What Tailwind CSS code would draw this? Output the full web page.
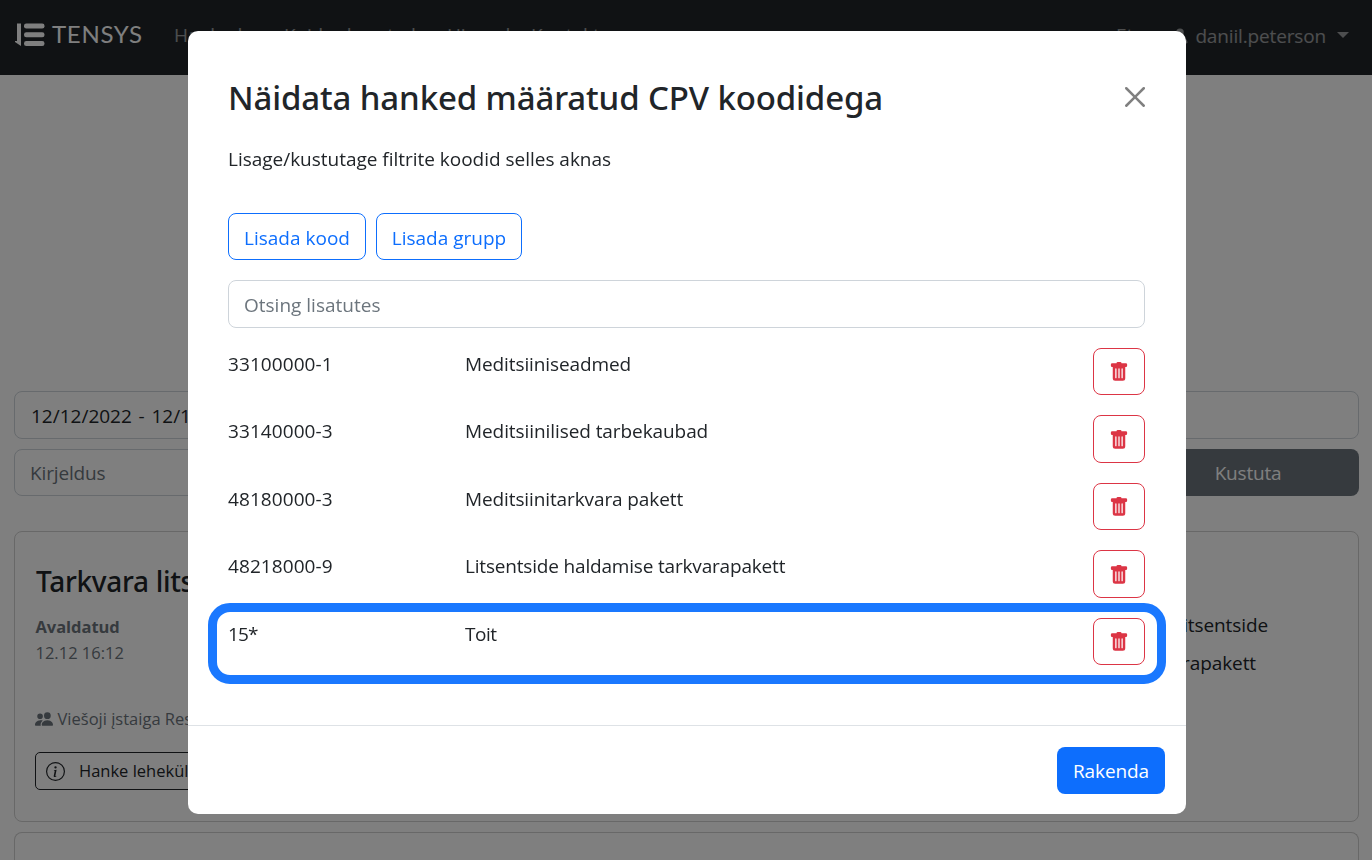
<!DOCTYPE html>
<html lang="et">
<head>
<meta charset="utf-8">
<title>Tensys</title>
<script src="https://cdn.jsdelivr.net/npm/@tailwindcss/browser@4"></script>
</head>
<body class="h-[860px] overflow-hidden bg-white font-['Open_Sans','Noto_Sans',sans-serif] text-[19px] leading-[30px] text-[#212529]">
<svg class="hidden">
  <symbol id="trash" viewBox="0 0 16 16"><path d="M2.5 1a1 1 0 0 0-1 1v1a1 1 0 0 0 1 1H3v9a2 2 0 0 0 2 2h6a2 2 0 0 0 2-2V4h.5a1 1 0 0 0 1-1V2a1 1 0 0 0-1-1H10a1 1 0 0 0-1-1H7a1 1 0 0 0-1 1H2.5zm3 4a.5.5 0 0 1 .5.5v7a.5.5 0 0 1-1 0v-7a.5.5 0 0 1 .5-.5zM8 5a.5.5 0 0 1 .5.5v7a.5.5 0 0 1-1 0v-7A.5.5 0 0 1 8 5zm3 .5v7a.5.5 0 0 1-1 0v-7a.5.5 0 0 1 1 0z"/></symbol>
</svg>

<header class="flex h-[75px] items-center bg-[#212529] pb-[3px] pl-[15px] pr-[23px] text-white/55">
  <div class="mr-[30px] flex items-center text-white">
    <svg class="mt-[-3px] h-[24px] w-[30px]" viewBox="0 0 30 24" fill="currentColor"><path d="M2 0.5h4v22.500L0 19v-1h2z"/><rect x="9" y="0.500" width="20.500" height="5" rx="2.300"/><rect x="9" y="9.300" width="20.500" height="5" rx="2.300"/><rect x="9" y="18.100" width="20.500" height="5" rx="2.300"/></svg>
    <span class="ml-[7px] mt-[-5px] w-[92px] font-['Lato'] text-[24px] tracking-[0.7px]">TENSYS</span>
  </div>
  <nav class="flex items-center gap-[21px] whitespace-nowrap pb-[2px]">
    <span class="flex w-[89px] items-center justify-between">Hanked<i class="h-0 w-0 border-x-[6px] border-t-[6px] border-x-transparent border-t-current"></i></span>
    <span class="w-[142px] tracking-[-0.2px]">Kuidas kasutada</span>
    <span class="w-[63px] tracking-[-0.2px]">Hinnad</span>
    <span>Kontakt</span>
  </nav>
  <div class="ml-auto flex items-center whitespace-nowrap">
    <span class="mr-[7px] pb-[2px]">Et</span>
    <i class="mr-[18px] h-0 w-0 border-x-[6px] border-t-[6px] border-x-transparent border-t-current"></i>
    <svg class="mr-[5px] h-[20px] w-[20px]" viewBox="0 0 16 16" fill="currentColor"><path d="M3 14s-1 0-1-1 1-4 6-4 6 3 6 4-1 1-1 1H3zm5-6a3 3 0 1 0 0-6 3 3 0 0 0 0 6z"/></svg>
    <span class="tracking-[-0.15px]">daniil.peterson</span>
    <i class="mb-[2px] ml-[11px] h-0 w-0 border-x-[6px] border-t-[6px] border-x-transparent border-t-current"></i>
  </div>
</header>

<main class="flex flex-col px-[14px] pr-[13px] pt-[316px]">
  <div class="flex h-[48px] items-center rounded-[8px] border border-[#ced4da] px-[16px] pt-px [word-spacing:1.8px]">12/12/2022 - 12/12/2022</div>
  <div class="mt-[10px] flex h-[47px] gap-[10px]">
    <div class="flex flex-1 items-center rounded-[8px] border border-[#ced4da] px-[15px] tracking-[-0.15px] text-[#6c757d]">Kirjeldus</div>
    <div class="flex w-[222px] items-center justify-center rounded-[8px] bg-[#6c757d] text-white"><span class="tracking-[-0.2px]">Kustuta</span></div>
  </div>

  <article class="mt-[35px] flex h-[291px] justify-between rounded-[8px] border border-[#d0d0d0] pl-[20px] pt-[31px]">
    <div class="flex flex-col items-start whitespace-nowrap text-[16.5px] leading-[26px]">
      <h2 class="ml-px font-['Noto_Sans'] text-[28px] font-medium leading-[36px] tracking-[-0.3px]">Tarkvara lits</h2>
      <div class="ml-[0.5px] mt-[15px] font-bold tracking-[-0.05px] text-[#6c757d]">Avaldatud</div>
      <div class="ml-[0.5px] text-[#6c757d]">12.12 16:12</div>
      <div class="mt-[40px] flex items-center gap-[4.5px] text-[#6c757d]">
        <svg class="h-[18px] w-[18px]" viewBox="0 0 16 16" fill="currentColor"><path d="M7 14s-1 0-1-1 1-4 5-4 5 3 5 4-1 1-1 1H7zm4-6a3 3 0 1 0 0-6 3 3 0 0 0 0 6zm-5.784 6A2.238 2.238 0 0 1 5 13c0-1.355.68-2.750 1.936-3.720A6.325 6.325 0 0 0 5 9c-4 0-5 3-5 4s1 1 1 1h4.216zM4.500 8a2.500 2.500 0 1 0 0-5 2.500 2.500 0 0 0 0 5z"/></svg>
        Viešoji įstaiga Respublikinė
      </div>
      <div class="mt-[20px] flex h-[38px] items-center gap-[14px] rounded-[5px] border border-[#212529] px-[10px] text-[#212529]">
        <svg class="h-[19px] w-[19px]" viewBox="0 0 16 16" fill="currentColor"><path d="M8 15A7 7 0 1 1 8 1a7 7 0 0 1 0 14zm0 1A8 8 0 1 0 8 0a8 8 0 0 0 0 16z"/><path d="m8.930 6.588-2.290.287-.082.380.450.083c.294.070.352.176.288.469l-.738 3.468c-.194.897.105 1.319.808 1.319.545 0 1.178-.252 1.465-.598l.088-.416c-.200.176-.492.246-.686.246-.275 0-.375-.193-.304-.533L8.930 6.588zM9 4.500a1 1 0 1 1-2 0 1 1 0 0 1 2 0z"/></svg>
        <span>Hanke lehekülg</span>
      </div>
    </div>
    <div class="flex w-[250px] flex-col items-end whitespace-nowrap pt-[43px] leading-[38px] tracking-[-0.1px]">
      <div class="mr-[90px]">Litsentside</div>
      <div class="mr-[102px]">tarkvarapakett</div>
    </div>
  </article>
  <article class="mt-[10px] h-[28px] rounded-t-[8px] border border-b-0 border-[#d0d0d0]"></article>
</main>

<div class="fixed inset-0 flex items-start justify-center bg-black/50 pl-[2px] pt-[31px]">
  <section class="flex h-[783px] w-[998px] flex-col rounded-[10px] bg-white">
    <div class="flex h-[131px] items-center justify-between pl-[40px] pr-[41px]">
      <h1 class="whitespace-nowrap pt-[2px] font-['Noto_Sans'] text-[33px] font-medium tracking-[-0.13px]">Näidata hanked määratud CPV koodidega</h1>
      <svg class="h-[20px] w-[20px] text-[#808080]" viewBox="0 0 16 16" fill="currentColor"><path d="M.293.293a1 1 0 0 1 1.414 0L8 6.586 14.293.293a1 1 0 1 1 1.414 1.414L9.414 8l6.293 6.293a1 1 0 0 1-1.414 1.414L8 9.414l-6.293 6.293a1 1 0 0 1-1.414-1.414L6.586 8 .293 1.707a1 1 0 0 1 0-1.414z"/></svg>
    </div>
    <div class="flex flex-col px-[40px] pr-[41px]">
      <p class="mt-[-18px] tracking-[-0.02px]">Lisage/kustutage filtrite koodid selles aknas</p>
      <div class="mt-[39px] flex h-[47px] gap-[10px] text-[#0d6efd]">
        <button class="w-[138px] rounded-[8px] border border-[#0d6efd] pt-[2px]">Lisada kood</button>
        <button class="w-[146px] rounded-[8px] border border-[#0d6efd] pt-[2px]">Lisada grupp</button>
      </div>
      <div class="mt-[20px] flex h-[48px] items-center rounded-[8px] border border-[#ced4da] px-[15px] pt-[2px] text-[#6c757d]">Otsing lisatutes</div>
      <div class="mt-[19.75px] flex flex-col gap-[20px]">
        <div class="flex h-[47.5px]"><span class="w-[237px] pt-[0.75px] tracking-[0.08px]">33100000-1</span><span class="flex-1 pt-[0.75px] tracking-[-0.1px]">Meditsiiniseadmed</span><button class="flex w-[52px] items-center justify-center rounded-[8px] border border-[#dc3545] text-[#dc3545]"><svg class="mt-px h-[20px] w-[20px]" fill="currentColor"><use href="#trash"/></svg></button></div>
        <div class="flex h-[47.5px]"><span class="w-[237px] pt-[0.75px] tracking-[0.08px]">33140000-3</span><span class="flex-1 pt-[0.75px] tracking-[-0.08px]">Meditsiinilised tarbekaubad</span><button class="flex w-[52px] items-center justify-center rounded-[8px] border border-[#dc3545] text-[#dc3545]"><svg class="mt-px h-[20px] w-[20px]" fill="currentColor"><use href="#trash"/></svg></button></div>
        <div class="flex h-[47.5px]"><span class="w-[237px] pt-[0.75px] tracking-[0.08px]">48180000-3</span><span class="flex-1 pt-[0.75px] tracking-[-0.11px]">Meditsiinitarkvara pakett</span><button class="flex w-[52px] items-center justify-center rounded-[8px] border border-[#dc3545] text-[#dc3545]"><svg class="mt-px h-[20px] w-[20px]" fill="currentColor"><use href="#trash"/></svg></button></div>
        <div class="flex h-[47.5px]"><span class="w-[237px] pt-[0.75px] tracking-[0.08px]">48218000-9</span><span class="flex-1 pt-[0.75px] tracking-[-0.18px]">Litsentside haldamise tarkvarapakett</span><button class="flex w-[52px] items-center justify-center rounded-[8px] border border-[#dc3545] text-[#dc3545]"><svg class="mt-px h-[20px] w-[20px]" fill="currentColor"><use href="#trash"/></svg></button></div>
        <div class="relative flex h-[47.5px]"><span class="w-[237px] pt-[0.75px] tracking-[-0.9px]">15*</span><span class="flex-1 pt-[0.75px] tracking-[-0.45px]">Toit</span><button class="flex w-[52px] items-center justify-center rounded-[8px] border border-[#dc3545] text-[#dc3545]"><svg class="mt-px h-[20px] w-[20px]" fill="currentColor"><use href="#trash"/></svg></button>
          <div class="pointer-events-none absolute -left-[20px] -right-[21px] -top-[15px] h-[81px] rounded-[22px] border-[9px] border-[#1a78ff]"></div>
        </div>
      </div>
    </div>
    <div class="mt-auto flex h-[89px] items-start justify-end border-t border-[#dee2e6] pr-[21px] pt-[21px]">
      <button class="h-[47px] w-[108px] rounded-[8px] bg-[#0d6efd] pt-px tracking-[-0.1px] text-white">Rakenda</button>
    </div>
  </section>
</div>
</body>
</html>
